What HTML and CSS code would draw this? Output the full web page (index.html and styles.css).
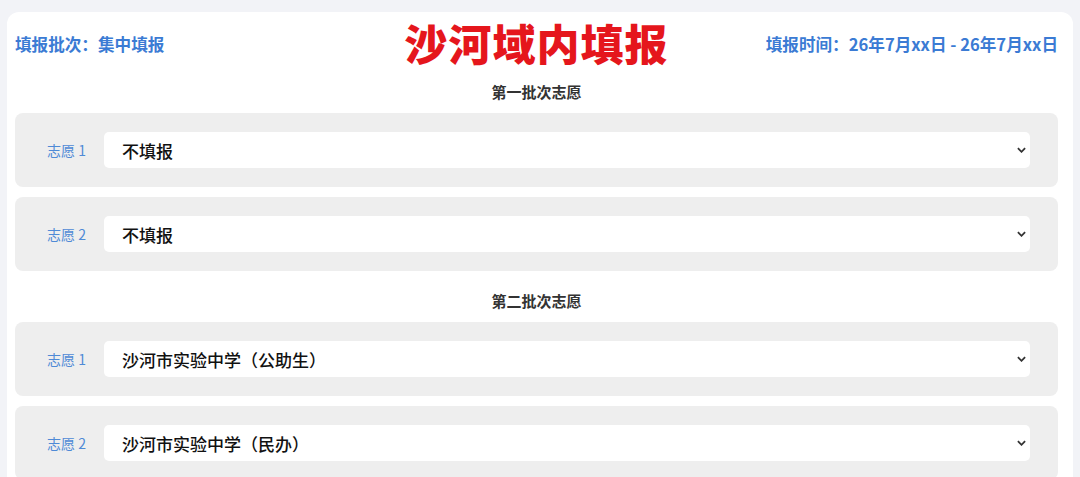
FILE: index.html
```html
<!DOCTYPE html>
<html lang="zh-CN">

<head>
    <meta charset="utf-8" />
    <title>沙河域内填报</title>
    <link rel="stylesheet" href="styles.css">
</head>

<body>
    <div class="card">
        <div class="head">
            <div class="batch">填报批次：集中填报</div>
            <h1 class="title">沙河域内填报</h1>
            <div class="time">填报时间：26年7月xx日 - 26年7月xx日</div>
        </div>

        <div class="group">
            <h2 class="group-title">第一批次志愿</h2>
            <div class="row">
                <label class="label">志愿 1</label>
                <div class="pick">
                    <select>
                        <option>不填报</option>
                    </select>
                    <svg class="arrow" viewBox="0 0 10 6"><path d="M1 1l4 4 4-4" /></svg>
                </div>
            </div>
            <div class="row">
                <label class="label">志愿 2</label>
                <div class="pick">
                    <select>
                        <option>不填报</option>
                    </select>
                    <svg class="arrow" viewBox="0 0 10 6"><path d="M1 1l4 4 4-4" /></svg>
                </div>
            </div>
        </div>

        <div class="group">
            <h2 class="group-title">第二批次志愿</h2>
            <div class="row">
                <label class="label">志愿 1</label>
                <div class="pick">
                    <select>
                        <option>沙河市实验中学（公助生）</option>
                    </select>
                    <svg class="arrow" viewBox="0 0 10 6"><path d="M1 1l4 4 4-4" /></svg>
                </div>
            </div>
            <div class="row">
                <label class="label">志愿 2</label>
                <div class="pick">
                    <select>
                        <option>沙河市实验中学（民办）</option>
                    </select>
                    <svg class="arrow" viewBox="0 0 10 6"><path d="M1 1l4 4 4-4" /></svg>
                </div>
            </div>
        </div>
    </div>
</body>

</html>
```

FILE: styles.css
```css
* {
    margin: 0;
    padding: 0;
    box-sizing: border-box;
}

body {
    background: #f2f3f7;
    font-family: "Noto Sans CJK SC", "Noto Sans", sans-serif;
    color: #222;
}

.card {
    width: 1066px;
    margin: 12px 0 0 7px;
    padding: 0 15px 20px 8px;
    background: #fff;
    border-radius: 12px;
}

/* 顶部：批次 / 标题 / 时间 */
.head {
    display: grid;
    grid-template-columns: 1fr auto 1fr;
    align-items: center;
    height: 60px;
}

.batch,
.time {
    font-size: 16.6px;
    font-weight: 700;
    color: #3b7bd4;
    padding-top: 3px;
}

.time {
    text-align: right;
}

.title {
    font-size: 43px;
    font-weight: 900;
    line-height: 60px;
    color: #e5161c;
    letter-spacing: 1px;
}

.group + .group {
    margin-top: 20px;
}

.group-title {
    font-size: 15px;
    font-weight: 700;
    line-height: 20px;
    height: 20px;
    margin: 10px 0 11px;
    text-align: center;
    color: #333;
}

.row {
    display: flex;
    align-items: center;
    height: 74px;
    padding: 0 28px 0 32px;
    background: #eeeeee;
    border-radius: 8px;
}

.row + .row {
    margin-top: 10px;
}

.label {
    width: 57px;
    flex-shrink: 0;
    font-size: 14px;
    color: #4f8ad6;
}

.pick {
    flex: 1;
    position: relative;
}

.pick select {
    width: 100%;
    height: 36px;
    padding: 0 40px 0 18px;
    border: none;
    border-radius: 5px;
    background: #fff;
    font-family: inherit;
    font-size: 17px;
    font-weight: 500;
    color: #111;
    appearance: none;
    -webkit-appearance: none;
    outline: none;
}

/* 下拉箭头 */
.pick .arrow {
    position: absolute;
    right: 4px;
    top: 15px;
    width: 9px;
    height: 6px;
    fill: none;
    stroke: #333;
    stroke-width: 2;
    pointer-events: none;
}
```
